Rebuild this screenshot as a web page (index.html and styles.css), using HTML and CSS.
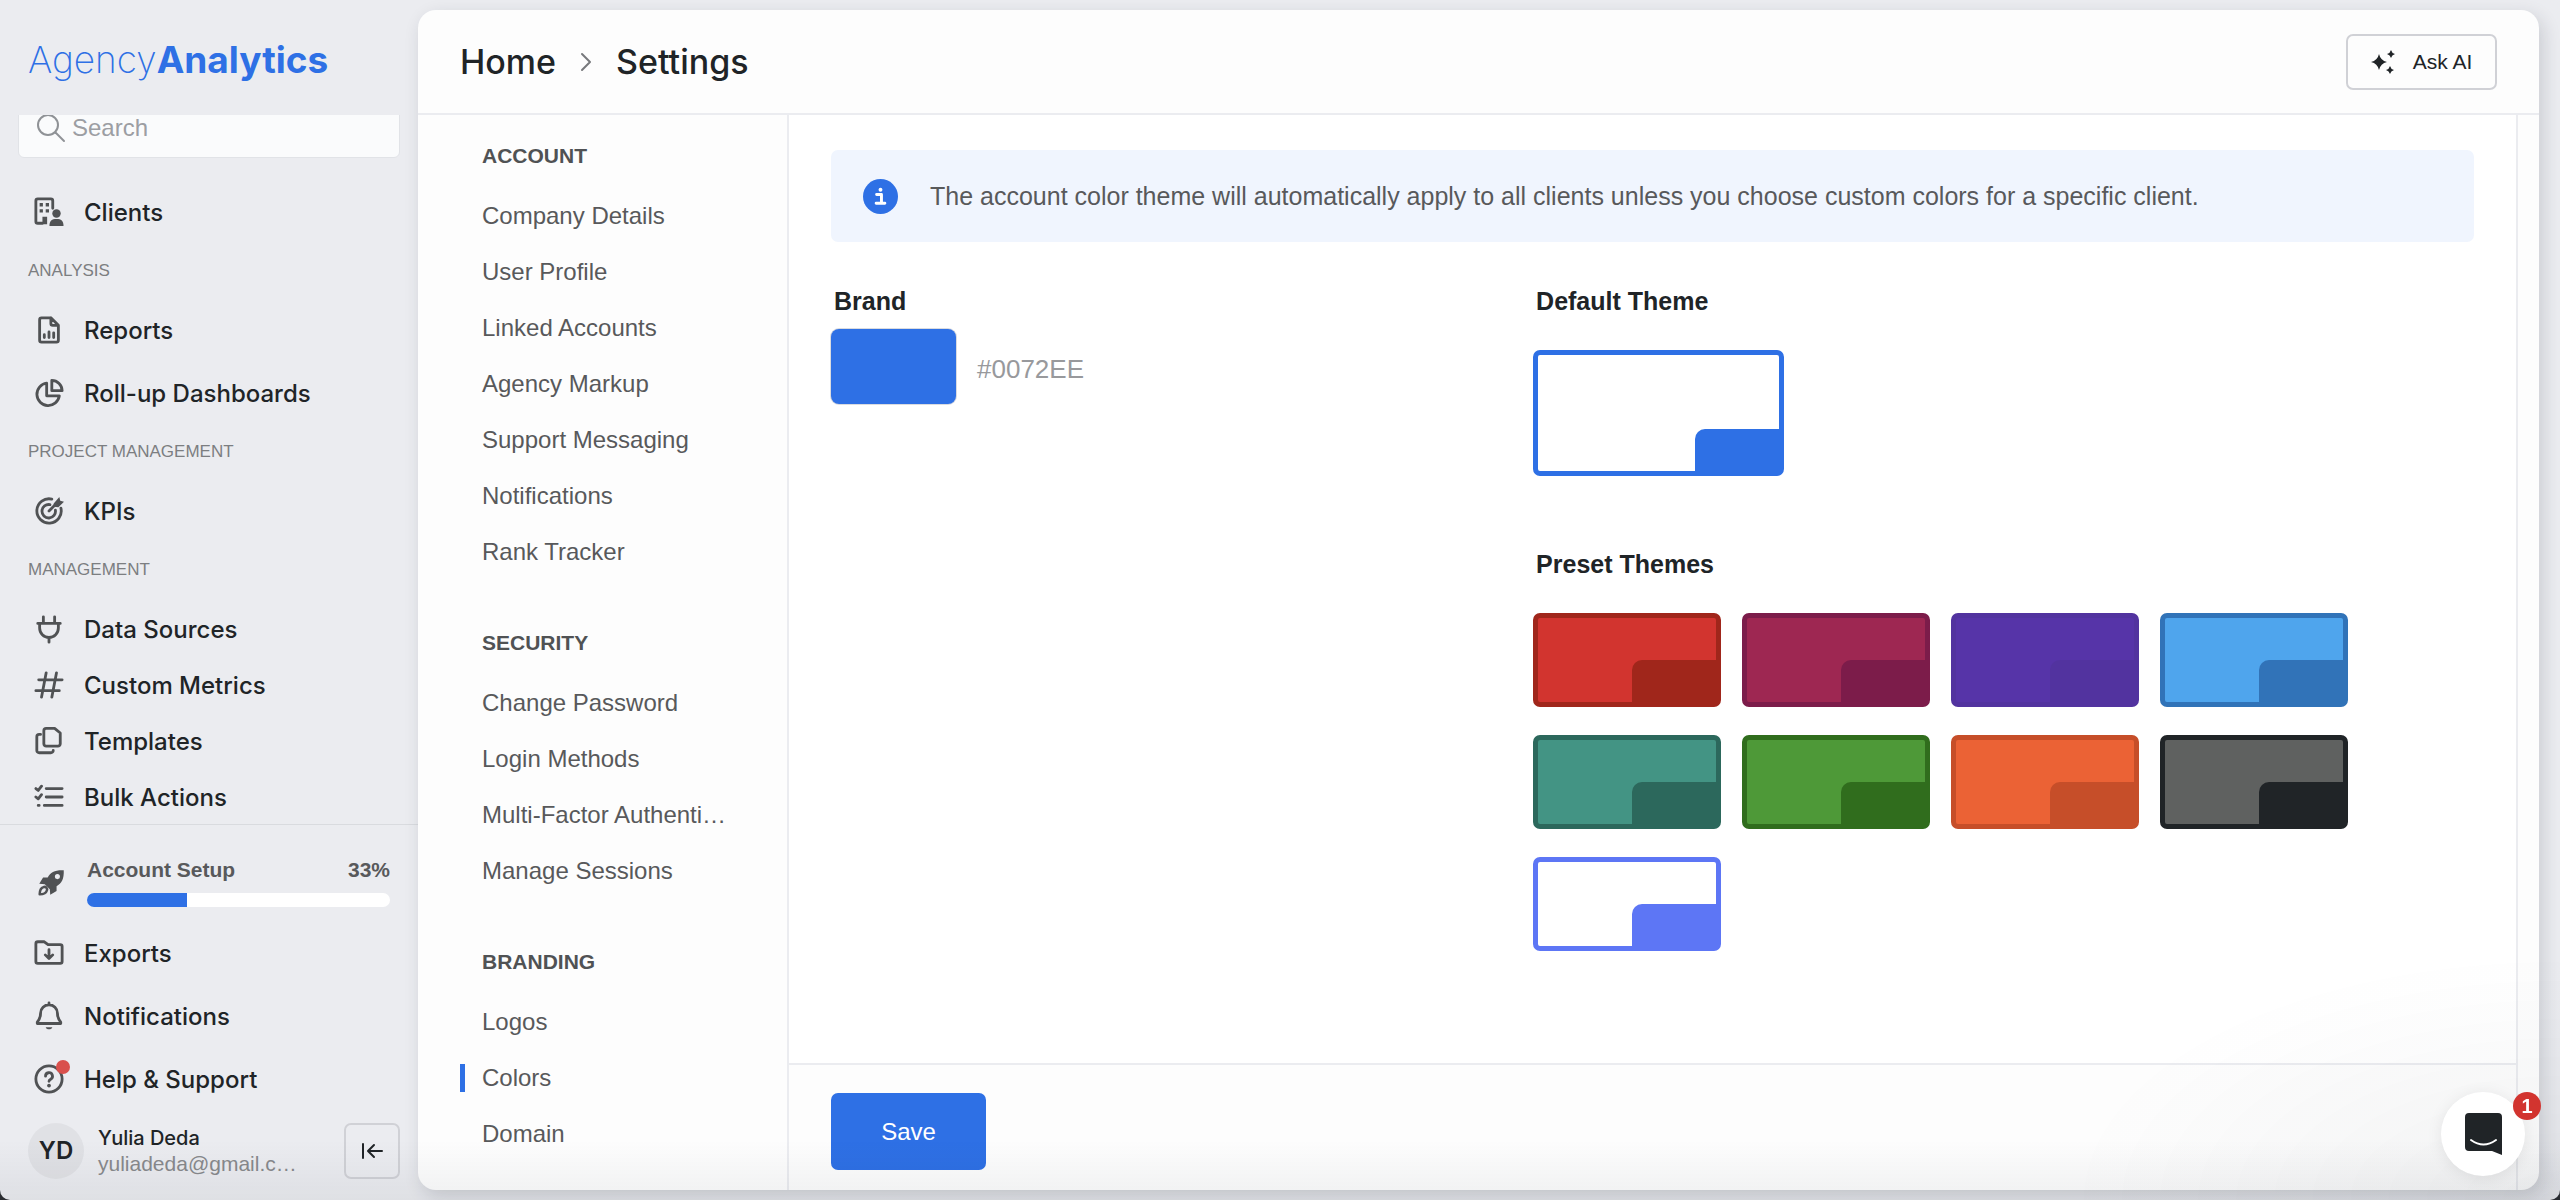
FILE: index.html
```html
<!DOCTYPE html>
<html lang="en">
<head>
    <meta charset="UTF-8">
    <meta name="viewport" content="width=device-width, initial-scale=1.0">
    <title>Settings | AgencyAnalytics</title>
    <link rel="stylesheet" href="styles.css">
</head>
<body>
    <div id="app">
        <aside id="sidebar">
            <a href="#" class="logo"><span>Agency</span><b>Analytics</b></a>

            <div class="side-scroll">
                <label class="search">
                    <svg viewBox="0 0 30 30"><circle cx="12" cy="12" r="10"/><path d="M19.500 19.500L28 28"/></svg>
                    <input type="text" placeholder="Search" aria-label="Search">
                </label>

                <nav class="side-nav">
                    <a href="#" class="side-link">
                        <svg viewBox="0 0 32 32"><path d="M9 28H4a2 2 0 0 1-2-2V4a2 2 0 0 1 2-2h14a2 2 0 0 1 2 2v8"/><path class="fill" d="M6 6.500h3.500V10H6zM12.500 6.500H16V10h-3.500zM6 13h3.500v3.500H6zM12.500 13H16v3.500h-3.500zM9 21h5v8H9zM16.500 31c0-5.500 2.500-7.500 7.500-7.500s7.500 2 7.500 7.500z"/><circle class="fill" cx="24" cy="17.500" r="4.500"/></svg>
                        Clients
                    </a>

                    <h3>Analysis</h3>
                    <div class="side-group">
                        <a href="#" class="side-link">
                            <svg viewBox="0 0 32 32"><path d="M18 3H8a2 2 0 0 0-2 2v22a2 2 0 0 0 2 2h16a2 2 0 0 0 2-2V11L18 3v6a2 2 0 0 0 2 2h6M11 24v-3M16 24v-6M21 24v-5"/></svg>
                            Reports
                        </a>
                        <a href="#" class="side-link">
                            <svg viewBox="0 0 32 32"><path d="M13.500 5.500A12 12 0 1 0 27 19H13.500zM19 2.500v11h11C30 7.500 25 2.500 19 2.500z"/></svg>
                            Roll-up Dashboards
                        </a>
                    </div>

                    <h3>Project Management</h3>
                    <a href="#" class="side-link">
                        <svg viewBox="0 0 32 32"><path d="M19 3.300A13 13 0 1 0 28.700 13M17 9.200A7.200 7.200 0 1 0 22.800 15M16 16l9-9"/><path class="fill" d="M21 8l6-7 1 4 4 1-6 6-5-.500z"/></svg>
                        KPIs
                    </a>

                    <h3>Management</h3>
                    <a href="#" class="side-link">
                        <svg viewBox="0 0 32 32"><path d="M4 10h24M6 10v5a10 10 0 0 0 20 0v-5M10 10V3M22 10V3M16 25v5"/></svg>
                        Data Sources
                    </a>
                    <a href="#" class="side-link">
                        <svg viewBox="0 0 32 32"><path d="M5 10.500h25M2 22h25M13 3L8 29M24 3l-5 26"/></svg>
                        Custom Metrics
                    </a>
                    <a href="#" class="side-link">
                        <svg viewBox="0 0 32 32"><path d="M13 2.500h9l6 5V19a2.500 2.500 0 0 1-2.500 2.500H13A2.500 2.500 0 0 1 10.500 19V5A2.500 2.500 0 0 1 13 2.500zM7 9H5.500A2.500 2.500 0 0 0 3 11.500V26a2.500 2.500 0 0 0 2.500 2.500H18a2.500 2.500 0 0 0 2.500-2.500"/></svg>
                        Templates
                    </a>
                    <a href="#" class="side-link">
                        <svg viewBox="0 0 32 32"><path d="M13 7h17M13 16h17M11 25h19M2 7l2.500 2L8 4.500M2 16l2.500 2L8 13.500M4.500 25h1"/></svg>
                        Bulk Actions
                    </a>
                </nav>
            </div>

            <div class="side-foot">
                <div class="setup">
                    <svg viewBox="0 0 32 32"><path class="fill" fill-rule="evenodd" d="M30.500 1.500C20 1 15 4 11.500 10H6L1.500 17.500l6.500.500 6 6 .500 6.500 7.500-4.500v-5.500C28 17 31 12 30.500 1.500zM23 6a3 3 0 1 1 0 6 3 3 0 0 1 0-6z"/><path d="M6.500 21.500c-3 1-4.500 4-4.500 8.500 4.500 0 7.500-1 8.500-4.500a3 3 0 0 0-4-4z"/></svg>
                    <div class="setup-info">
                        <div class="setup-text"><span>Account Setup</span><span>33%</span></div>
                        <div class="bar"><div style="width: 33%"></div></div>
                    </div>
                </div>
                <div class="side-group">
                    <a href="#" class="side-link">
                        <svg viewBox="0 0 32 32"><path d="M4 4h7l4 3h13a2 2 0 0 1 2 2v16a2 2 0 0 1-2 2H4a2 2 0 0 1-2-2V6a2 2 0 0 1 2-2zM16 12.500v9M12 18l4 4 4-4"/></svg>
                        Exports
                    </a>
                    <a href="#" class="side-link">
                        <svg viewBox="0 0 32 32"><path d="M16 2v2M16 4a9 9 0 0 0-9 9c0 5-1.500 7-3.500 9.500v1.500h25v-1.500C26.500 20 25 18 25 13a9 9 0 0 0-9-9z"/><path class="fill" d="M12.500 28h7c-.500 3-6.500 3-7 0z"/></svg>
                        Notifications
                    </a>
                    <a href="#" class="side-link">
                        <span class="help">
                            <svg viewBox="0 0 32 32"><circle cx="16" cy="16" r="14"/><path d="M12.300 13a3.700 3.700 0 1 1 5.500 3.200c-1.300.700-1.800 1.300-1.800 2.300"/><circle class="fill" cx="16" cy="23" r="2"/></svg>
                            <i></i>
                        </span>
                        Help &amp; Support
                    </a>
                </div>
                <div class="user">
                    <div class="avatar">YD</div>
                    <div class="user-info">
                        <strong>Yulia Deda</strong>
                        <span>yuliadeda@gmail.c…</span>
                    </div>
                    <button class="collapse" aria-label="Collapse menu">
                        <svg viewBox="0 0 24 24"><path d="M3 5v14M22 12H9M14 6l-6 6 6 6"/></svg>
                    </button>
                </div>
            </div>
        </aside>

        <main id="panel">
            <header>
                <div class="crumbs">
                    <a href="#">Home</a>
                    <svg viewBox="0 0 12 20"><path d="M2 2l8 8-8 8"/></svg>
                    <h1>Settings</h1>
                </div>
                <button class="ask">
                    <svg viewBox="0 0 24 24"><path d="M8 4q1.500 6.500 8 8-6.500 1.500-8 8-1.500-6.500-8-8 6.500-1.500 8-8zM20 0q.800 3.200 4 4-3.200.800-4 4-.800-3.200-4-4 3.200-.800 4-4zM19 16q.800 3.200 4 4-3.200.800-4 4-.800-3.200-4-4 3.200-.800 4-4z"/></svg>
                    Ask AI
                </button>
            </header>

            <div class="columns">
                <nav class="settings-nav">
                    <section>
                        <h2>Account</h2>
                        <a href="#">Company Details</a>
                        <a href="#">User Profile</a>
                        <a href="#">Linked Accounts</a>
                        <a href="#">Agency Markup</a>
                        <a href="#">Support Messaging</a>
                        <a href="#">Notifications</a>
                        <a href="#">Rank Tracker</a>
                    </section>
                    <section>
                        <h2>Security</h2>
                        <a href="#">Change Password</a>
                        <a href="#">Login Methods</a>
                        <a href="#">Multi-Factor Authenti…</a>
                        <a href="#">Manage Sessions</a>
                    </section>
                    <section>
                        <h2>Branding</h2>
                        <a href="#">Logos</a>
                        <a href="#" class="active">Colors</a>
                        <a href="#">Domain</a>
                    </section>
                </nav>

                <div class="content">
                    <div class="content-body">
                        <div class="notice">
                            <svg viewBox="0 0 36 36"><circle cx="18" cy="18" r="18"/><path d="M14 16h5v9M13.500 25h9"/><circle class="dot" cx="18" cy="11" r="2"/></svg>
                            <p>The account color theme will automatically apply to all clients unless you choose custom colors for a specific client.</p>
                        </div>

                        <div class="themes">
                            <section class="brand">
                                <h4>Brand</h4>
                                <div class="brand-color">
                                    <button aria-label="Brand color"></button>
                                    <span>#0072EE</span>
                                </div>
                            </section>
                            <section class="theme-list">
                                <h4>Default Theme</h4>
                                <div class="swatches">
                                    <button class="swatch large blue" aria-label="Default"></button>
                                </div>
                                <h4>Preset Themes</h4>
                                <div class="swatches">
                                    <button class="swatch red" aria-label="Red"></button>
                                    <button class="swatch berry" aria-label="Berry"></button>
                                    <button class="swatch purple" aria-label="Purple"></button>
                                    <button class="swatch sky" aria-label="Sky"></button>
                                    <button class="swatch teal" aria-label="Teal"></button>
                                    <button class="swatch green" aria-label="Green"></button>
                                    <button class="swatch orange" aria-label="Orange"></button>
                                    <button class="swatch dark" aria-label="Dark"></button>
                                    <button class="swatch indigo" aria-label="Indigo"></button>
                                </div>
                            </section>
                        </div>
                    </div>
                    <div class="actions">
                        <button class="save">Save</button>
                    </div>
                </div>
            </div>
        </main>
    </div>

    <div class="bottom-shade"></div>
    <div class="chat-shade"></div>
    <button class="chat" aria-label="Open chat">
        <svg viewBox="0 0 37 42"><path d="M4 0h29a4 4 0 0 1 4 4v38l-10-4H4a4 4 0 0 1-4-4V4a4 4 0 0 1 4-4z"/><path class="smile" d="M6 27q12.500 9 25 0"/></svg>
        <span>1</span>
    </button>
</body>
</html>
```
FILE: styles.css
```css
* { margin: 0; padding: 0; box-sizing: border-box; }

html { background: #2b2d30; }

body {
    min-height: 100vh;
    overflow: hidden;
    background: #ebecf0;
    border-radius: 0 0 10px 10px;
    font-family: "Liberation Sans", Arial, sans-serif;
    font-size: 24px;
    color: #58595b;
}

a { color: inherit; text-decoration: none; }

button {
    appearance: none;
    border: none;
    font: inherit;
    cursor: pointer;
}

svg {
    flex: none;
    fill: none;
    stroke: currentColor;
    stroke-width: 2;
    stroke-linecap: round;
    stroke-linejoin: round;
}

svg .fill { fill: currentColor; stroke: none; }

#app {
    display: flex;
    height: 100vh;
}

/* sidebar */
#sidebar {
    width: 418px;
    flex: none;
    display: flex;
    flex-direction: column;
}

.logo {
    flex: none;
    height: 115px;
    padding: 36px 28px 0;
    font-family: Inter, sans-serif;
    font-size: 37px;
    line-height: 48px;
    color: #2e70e5;
}

.logo span { font-weight: 200; }
.logo b { font-weight: 700; }

.side-scroll {
    flex: 1;
    min-height: 0;
    overflow: hidden;
}

/* the list is scrolled a little, so the search box is cut by the logo bar */
.search {
    display: flex;
    align-items: center;
    gap: 6px;
    height: 60px;
    margin: -17px 18px 26px;
    padding: 0 17px;
    background: #fafbfc;
    border: 1px solid #e1e3e7;
    border-radius: 6px;
    color: #8f9296;
}

.search svg { width: 30px; height: 30px; }

.search input {
    width: 100%;
    border: none;
    outline: none;
    background: none;
    font: inherit;
    color: inherit;
}

.search input::placeholder { color: #9c9ea3; }

.side-nav h3 {
    padding-left: 28px;
    font-size: 17px;
    font-weight: 400;
    line-height: 62px;
    text-transform: uppercase;
    color: #7c7e81;
}

.side-group {
    display: flex;
    flex-direction: column;
    gap: 7px;
}

.side-link {
    display: flex;
    align-items: center;
    gap: 20px;
    height: 56px;
    padding-left: 34px;
    font-family: Inter, sans-serif;
    font-size: 24px;
    font-weight: 500;
    color: #202427;
}

.side-link svg {
    display: block;
    width: 30px;
    height: 30px;
    stroke-width: 3;
    color: #505254;
}

.side-foot {
    flex: none;
    border-top: 1px solid #d9dbdf;
}

.setup {
    display: flex;
    align-items: center;
    gap: 22px;
    height: 100px;
    padding: 0 28px 0 38px;
}

.setup svg {
    width: 27px;
    height: 27px;
    margin-top: 14px;
    stroke-width: 3;
    color: #505254;
}

.setup-info { flex: 1; padding-top: 28px; }

.setup-text {
    display: flex;
    justify-content: space-between;
    font-size: 21px;
    font-weight: 700;
    line-height: 30px;
    padding-bottom: 8px;
}

.bar {
    height: 14px;
    margin-bottom: 17px;
    border-radius: 7px;
    background: #fff;
    overflow: hidden;
}

.bar div { height: 100%; background: #2e70e5; }

.help { position: relative; }

.help i {
    position: absolute;
    top: -4px;
    right: -6px;
    width: 14px;
    height: 14px;
    border-radius: 50%;
    background: #d9504c;
}

.user {
    display: flex;
    align-items: center;
    gap: 14px;
    padding: 16px 18px 21px 28px;
}

.avatar {
    flex: none;
    width: 56px;
    height: 56px;
    border-radius: 50%;
    background: #e0e1e5;
    font-family: Inter, sans-serif;
    font-weight: 600;
    line-height: 56px;
    text-align: center;
    color: #202427;
}

.user-info {
    line-height: 25px;
    font-size: 21px;
    color: #88898c;
}

.user-info strong {
    display: block;
    font-family: Inter, sans-serif;
    font-size: 20px;
    font-weight: 500;
    color: #202427;
}

.user-info span { white-space: nowrap; }

.collapse {
    display: grid;
    place-items: center;
    width: 56px;
    height: 56px;
    margin-left: auto;
    background: none;
    border: 2px solid #d0d1d6;
    border-radius: 7px;
    color: #202427;
}

.collapse svg { width: 24px; height: 24px; }

/* white panel */
#panel {
    flex: 1;
    min-width: 0;
    display: flex;
    flex-direction: column;
    margin: 10px 21px 10px 0;
    background: #fdfdfd;
    border-radius: 18px;
    box-shadow: 4px 6px 18px rgba(32, 36, 50, 0.16);
    overflow: hidden;
}

header {
    flex: none;
    display: flex;
    align-items: center;
    justify-content: space-between;
    height: 105px;
    padding: 0 42px;
    border-bottom: 2px solid #ebecf0;
    color: #202427;
}

.crumbs {
    display: flex;
    align-items: center;
    gap: 24px;
    font-family: Inter, sans-serif;
    font-size: 34px;
    font-weight: 500;
}

.crumbs h1 { font: inherit; }
.crumbs svg { width: 12px; height: 20px; color: #77797c; }

.ask {
    display: flex;
    align-items: center;
    justify-content: center;
    gap: 18px;
    width: 151px;
    height: 56px;
    border: 2px solid #d0d1d6;
    border-radius: 7px;
    background: #fdfdfd;
    font-size: 21px;
    color: #202427;
}

.ask svg { width: 24px; height: 24px; fill: currentColor; stroke: none; }

.columns {
    flex: 1;
    min-height: 0;
    display: flex;
}

.settings-nav {
    flex: none;
    width: 371px;
    padding: 9px 42px 0;
    border-right: 2px solid #ebecf0;
    overflow: hidden;
}

.settings-nav section { margin-bottom: 31px; }

.settings-nav h2 {
    padding-left: 22px;
    font-size: 21px;
    line-height: 64px;
    text-transform: uppercase;
    color: #505254;
}

.settings-nav a {
    display: block;
    padding-left: 22px;
    line-height: 56px;
    white-space: nowrap;
}

.settings-nav .active {
    background: linear-gradient(#2e70e5, #2e70e5) left center / 5px 28px no-repeat;
}

.content {
    flex: 1;
    min-width: 0;
    display: flex;
    flex-direction: column;
    margin-right: 21px;
    background: #fff;
    border-right: 2px solid #ebecf0;
}

.content-body {
    flex: 1;
    min-height: 0;
    padding: 35px 42px;
    overflow: hidden;
}

.notice {
    display: flex;
    align-items: center;
    gap: 32px;
    min-height: 92px;
    padding: 0 32px;
    border-radius: 7px;
    background: #f0f5fe;
    font-size: 25px;
}

.notice svg {
    width: 35px;
    height: 35px;
    fill: #2e70e5;
    stroke: none;
}

.notice path { fill: none; stroke: #fff; stroke-width: 3; }
.notice .dot { fill: #fff; }

.themes {
    display: grid;
    grid-template-columns: repeat(12, 1fr);
    gap: 42px;
    padding-top: 42px;
}

.brand { grid-column: span 5; }
.theme-list { grid-column: span 7; }

.themes h4 {
    padding-left: 3px;
    font-size: 25px;
    line-height: 34px;
    color: #202427;
}

.brand-color {
    display: flex;
    align-items: center;
    gap: 21px;
    padding-top: 11px;
    font-size: 26px;
    color: #98999c;
}

.brand-color button {
    width: 125px;
    height: 75px;
    border-radius: 8px;
    background: #2e70e5;
    box-shadow: 0 0 0 1px #d9dbe0;
}

.brand-color span { padding-top: 6px; }

.swatches {
    display: flex;
    flex-wrap: wrap;
    gap: 28px 21px;
    padding: 32px 0 71px;
}

.swatch {
    position: relative;
    width: 188px;
    height: 94px;
    border: 5px solid;
    border-radius: 7px;
}

.swatch::after {
    content: "";
    position: absolute;
    right: -1px;
    bottom: -1px;
    width: 85px;
    height: 43px;
    border-radius: 10px 0 0 0;
    background: currentColor;
}

.swatch.large { width: 251px; height: 126px; }

.blue { color: #2e70e5; background: #fff; }
.red { color: #a0261b; background: #d2342f; }
.berry { color: #7c1c4a; background: #9e2752; }
.purple { color: #52339f; background: #5634a8; }
.sky { color: #3173b8; background: #4fa5ed; }
.teal { color: #2c685c; background: #439484; }
.green { color: #306d1d; background: #4e9938; }
.orange { color: #c64e29; background: #eb6235; }
.dark { color: #202427; background: #5f6160; }
.indigo { color: #5d76f5; background: #fff; }

.actions {
    flex: none;
    padding: 28px 42px 20px;
    border-top: 2px solid #ebecf0;
    background: #fdfdfd;
}

.save {
    display: block;
    width: 155px;
    height: 77px;
    border-radius: 7px;
    background: #2e70e5;
    color: #fff;
}

/* soft shade along the bottom of the window */
.bottom-shade {
    position: fixed;
    left: 0;
    right: 0;
    bottom: 0;
    height: 60px;
    background: linear-gradient(rgba(29, 39, 54, 0), rgba(29, 39, 54, 0.06));
    pointer-events: none;
}

/* chat launcher */
.chat-shade {
    position: fixed;
    right: 0;
    bottom: 0;
    width: 500px;
    height: 250px;
    background: radial-gradient(ellipse at bottom right, rgba(29, 39, 54, 0.05) 0, rgba(29, 39, 54, 0) 70%);
    pointer-events: none;
}

.chat {
    position: fixed;
    right: 35px;
    bottom: 24px;
    display: grid;
    place-items: center;
    width: 84px;
    height: 84px;
    border-radius: 50%;
    background: #fff;
    box-shadow: 0 2px 16px rgba(0, 0, 0, 0.08);
}

.chat svg { width: 37px; height: 42px; fill: #202427; stroke: none; }
.chat .smile { fill: none; stroke: #fff; stroke-width: 2; }

.chat span {
    position: absolute;
    top: 0;
    right: -16px;
    width: 28px;
    height: 28px;
    border-radius: 50%;
    background: #d2342f;
    font-size: 20px;
    font-weight: 700;
    line-height: 28px;
    color: #fff;
}
```
